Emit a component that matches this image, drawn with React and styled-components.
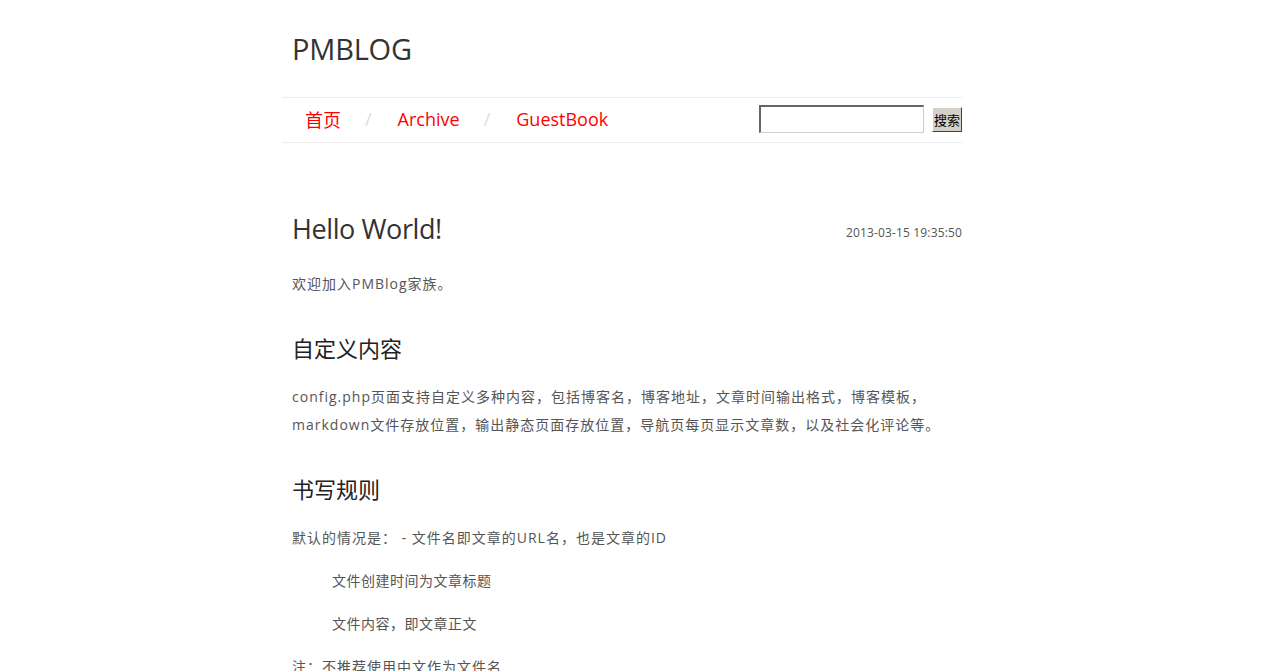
import React from 'react';
import styled, { createGlobalStyle } from 'styled-components';

const GlobalStyle = createGlobalStyle`
  html, body {
    margin: 0;
    padding: 0;
    background: #fff;
  }
  body {
    font-family: "Open Sans", "Noto Sans CJK SC", sans-serif;
    color: #555;
  }
`;

// page is centred as if a 19px scrollbar took room on the right
const Page = styled.div`
  width: 680px;
  margin-left: calc((100% - 699px) / 2);
`;

const Header = styled.div`
  padding: 28px 10px 27px;
`;

const Logo = styled.h1`
  margin: 0;
  font-size: 29px;
  font-weight: normal;
  line-height: 42px;
  letter-spacing: -0.2px;
  color: #333;
`;

const NavBar = styled.div`
  display: flex;
  align-items: center;
  justify-content: space-between;
  height: 44px;
  border-top: 1px solid #eee;
  border-bottom: 1px solid #eee;
`;

const NavList = styled.ul`
  display: flex;
  align-items: center;
  list-style: none;
  margin: 0;
  padding: 0 0 2px 23px;
`;

const NavLink = styled.a`
  color: #f00;
  font-size: 18px;
  text-decoration: none;
`;

const Sep = styled.li`
  color: #ddd;
  font-size: 18px;
  padding: 0 26px 0 24px;
`;

const SearchForm = styled.form`
  display: flex;
  align-items: center;
  gap: 8px;
`;

const SearchInput = styled.input`
  box-sizing: border-box;
  width: 165px;
  height: 28px;
  margin: 0 0 3px;
  padding: 0 3px;
  border: 2px solid;
  border-color: #666 #ccc #d4d0c8 #666;
  border-width: 2px 1px 1px 2px;
  background: #fff;
`;

const SearchButton = styled.button`
  box-sizing: border-box;
  width: 30px;
  height: 25px;
  margin-bottom: 1px;
  padding: 0;
  font-family: "Noto Sans CJK SC", sans-serif;
  font-size: 13px;
  color: #000;
  background: #d4d0c8;
  border: 1px solid;
  border-color: #fff #404040 #404040 #fff;
`;

const Article = styled.div`
  padding: 69px 0 0 10px;
`;

const PostHead = styled.div`
  display: flex;
  align-items: center;
  justify-content: space-between;
  margin-bottom: 24px;
`;

const PostTitle = styled.h2`
  margin: 0;
  font-size: 27px;
  font-weight: normal;
  line-height: 34px;
  letter-spacing: -0.4px;
  color: #333;
`;

const PostDate = styled.span`
  padding-top: 6px;
  font-size: 12px;
  letter-spacing: 0.15px;
  color: #555;
`;

const Para = styled.p`
  margin: 0 0 15px;
  font-size: 14px;
  line-height: 28px;
  color: #555;
  padding-left: ${({ indent }) => (indent ? '40px' : '0')};
  letter-spacing: ${({ indent }) => (indent ? '0.5px' : '1px')};
`;

const SubTitle = styled.h3`
  margin: 33px 0 18px;
  font-size: 22px;
  font-weight: normal;
  line-height: 34px;
  color: #222;
`;

export default function App() {
  return (
    <Page>
      <GlobalStyle />
      <Header>
        <Logo>PMBLOG</Logo>
      </Header>
      <NavBar>
        <NavList>
          <li><NavLink href="#">首页</NavLink></li>
          <Sep>/</Sep>
          <li><NavLink href="#">Archive</NavLink></li>
          <Sep>/</Sep>
          <li><NavLink href="#">GuestBook</NavLink></li>
        </NavList>
        <SearchForm onSubmit={(e) => e.preventDefault()}>
          <SearchInput type="text" />
          <SearchButton type="submit">搜索</SearchButton>
        </SearchForm>
      </NavBar>
      <Article>
        <PostHead>
          <PostTitle>Hello World!</PostTitle>
          <PostDate>2013-03-15 19:35:50</PostDate>
        </PostHead>
        <Para>欢迎加入PMBlog家族。</Para>
        <SubTitle>自定义内容</SubTitle>
        <Para>
          config.php页面支持自定义多种内容，包括博客名，博客地址，文章时间输出格式，博客模板，markdown文件存放位置，输出静态页面存放位置，导航页每页显示文章数，以及社会化评论等。
        </Para>
        <SubTitle>书写规则</SubTitle>
        <Para>默认的情况是： - 文件名即文章的URL名，也是文章的ID</Para>
        <Para indent>文件创建时间为文章标题</Para>
        <Para indent>文件内容，即文章正文</Para>
        <Para>注：不推荐使用中文作为文件名</Para>
      </Article>
    </Page>
  );
}
